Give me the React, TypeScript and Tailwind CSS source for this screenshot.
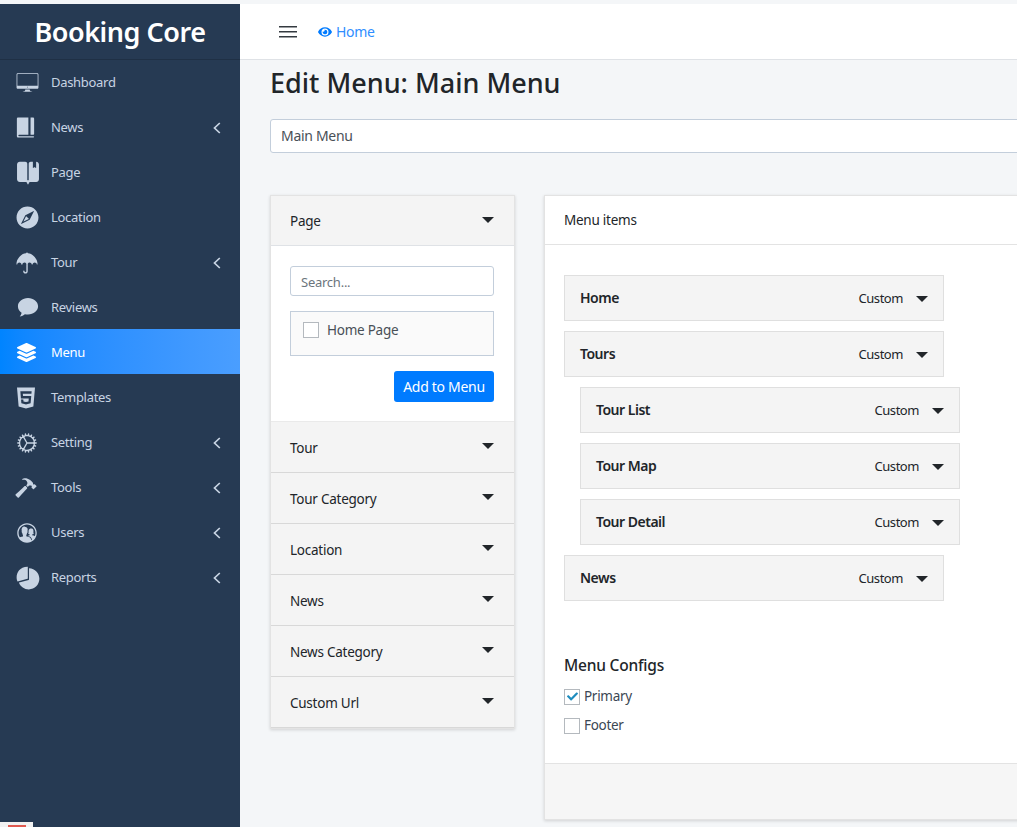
import React from "react";
import { IoIosDesktop, IoIosJournal, IoIosBookmarks, IoIosCompass, IoIosUmbrella, IoIosCog, IoIosHammer, IoIosContacts, IoIosPie, IoLogoHtml5 } from "react-icons/io";
import { FaLayerGroup, FaEye, FaCheck } from "react-icons/fa";

const Bubble = ({ size = 24 }: { size?: number }) => (
  <svg width={size} height={size} viewBox="0 0 24 24" fill="currentColor">
    <path d="M12 1C5.900 1 1 5 1 10c0 3 1.600 5.500 4 7.200-.2 1.600-1 3-2 4 2.200-.2 4.200-1.100 5.600-2.400 1.100.2 2.200.3 3.400.3 6.100 0 11-4 11-9S18.100 1 12 1z" />
  </svg>
);

const Back = () => (
  <svg width="8" height="12" viewBox="0 0 8 12" fill="none" stroke="currentColor" strokeWidth="1.700">
    <polyline points="6.800,1 1.500,6 6.800,11" />
  </svg>
);

const nav = [
  { label: "Dashboard", icon: <IoIosDesktop size={25} className="-ml-[2px]" /> },
  { label: "News", icon: <IoIosJournal size={23} className="-ml-[3px]" />, arrow: true },
  { label: "Page", icon: <IoIosBookmarks size={26} className="-ml-[2px]" /> },
  { label: "Location", icon: <IoIosCompass size={27} className="-ml-[3px]" /> },
  { label: "Tour", icon: <IoIosUmbrella size={26} className="-ml-[3px]" />, arrow: true },
  { label: "Reviews", icon: <Bubble size={22} /> },
  { label: "Menu", icon: <FaLayerGroup size={19} />, active: true },
  { label: "Templates", icon: <IoLogoHtml5 size={24} className="-ml-[3px]" /> },
  { label: "Setting", icon: <IoIosCog size={24} className="-ml-[2px]" />, arrow: true },
  { label: "Tools", icon: <IoIosHammer size={26} className="-ml-[4px]" />, arrow: true },
  { label: "Users", icon: <IoIosContacts size={24} className="-ml-[2px]" />, arrow: true },
  { label: "Reports", icon: <IoIosPie size={26} className="-ml-[2px]" />, arrow: true },
];

const Caret = () => <span className="block h-0 w-0 border-x-[6px] border-t-[6px] border-x-transparent border-t-[#212529]" />;

const SectionHead = ({ label, first }: { label: string; first?: boolean }) => (
  <div className={`flex items-center justify-between bg-[#f4f4f4] pl-[19px] pr-5 ${first ? "h-[50px] border-b border-[#dfe2e6]" : "h-[51px] border-b border-[#d8d8d8]"}`}>
    <span className="pt-[2px] text-[13.500px] tracking-[-0.25px]">{label}</span>
    <span className="mb-[2px]"><Caret /></span>
  </div>
);

const MenuItem = ({ label, child }: { label: string; child?: boolean }) => (
  <div className={`flex h-[46px] w-[380px] items-center justify-between border border-[#dfdfdf] bg-[#f4f4f4] pl-[15px] pr-[15px] ${child ? "ml-4" : ""}`}>
    <span className="mb-[2px] font-semibold tracking-[-0.5px]">{label}</span>
    <span className="mt-[1px] flex items-center gap-[13px] text-[13px] tracking-[-0.45px]">
      Custom
      <Caret />
    </span>
  </div>
);

const Check = ({ label, checked }: { label: string; checked?: boolean }) => (
  <label className="flex h-[29px] items-center gap-1">
    <span className="flex h-4 w-4 items-center justify-center border border-[#b4b9be] bg-white text-[#1e8cbe]">
      {checked && <FaCheck size={11} />}
    </span>
    <span className="text-[13.500px] tracking-[-0.3px] text-[#3b4754]">{label}</span>
  </label>
);

export default function App() {
  return (
    <div className="relative flex h-[827px] w-[1017px] overflow-hidden bg-[#f4f6f8] pt-1 text-[14px] text-[#212529] [font-family:'Noto_Sans',sans-serif]">
      <aside className="flex w-[240px] shrink-0 flex-col bg-[#263a53]">
        <div className="flex h-[55px] items-center justify-center text-[27px] font-semibold leading-none tracking-[-0.45px] text-white shadow-[0_1px_0_#1f3045]">
          Booking Core
        </div>
        {nav.map((n) => (
          <div
            key={n.label}
            className={`flex h-[45px] shrink-0 items-center pl-[17px] pr-[19px] pt-[2px] text-[13px] tracking-[-0.3px] ${n.active ? "bg-gradient-to-r from-[#0084ff] to-[#4a9eff] text-white" : "text-[#c8d4e3]"}`}
          >
            <span className="flex w-[34px] shrink-0 items-center">{n.icon}</span>
            <span className="flex-1">{n.label}</span>
            {n.arrow && <Back />}
          </div>
        ))}
      </aside>

      <main className="min-w-0 flex-1">
        <div className="flex h-[56px] items-center gap-[21px] border-b border-[#dfe2e6] bg-white pl-[39px]">
          <svg width="18" height="12" viewBox="0 0 18 12" className="text-[#343a40]" fill="currentColor">
            <rect y="0" width="18" height="1.500" />
            <rect y="5" width="18" height="1.500" />
            <rect y="10" width="18" height="1.500" />
          </svg>
          <span className="flex items-center gap-1 tracking-[-0.3px] text-[#2f8eff]">
            <FaEye size={14} className="text-[#007bff]" /> Home
          </span>
        </div>

        <div className="w-[900px] pl-[30px]">
          <h1 className="mt-[4px] text-[27px] font-medium leading-[38px]">Edit Menu: Main Menu</h1>
          <div className="mt-[17px] flex h-[34px] w-[860px] items-center rounded-[3px] border border-[#c3cedb] bg-white pb-[2px] pl-[10px] tracking-[-0.3px] text-[#495057]">
            Main Menu
          </div>

          <div className="mt-[42px] flex items-start gap-[29px]">
            <section className="w-[245px] shrink-0 border border-[#e3e3e3] shadow-[0_1px_3px_rgba(0,0,0,0.15)]">
              <SectionHead label="Page" first />
              <div className="flex h-[176px] flex-col border-b border-[#eaeaea] bg-white pl-[19px] pr-5 pt-5">
                <div className="flex h-[30px] items-center rounded-[3px] border border-[#c3cedb] pl-[10px] pt-[3px] text-[13px] tracking-[-0.25px] text-[#6c757d]">
                  Search...
                </div>
                <div className="mt-[15px] flex h-[45px] items-start gap-2 border border-[#c3cedb] bg-[#fafafa] pl-[12px] pt-[9px]">
                  <span className="mt-[1px] h-4 w-4 border border-[#b4b9be] bg-white" />
                  <span className="text-[13.500px] leading-[18px] tracking-[-0.25px] text-[#495057]">Home Page</span>
                </div>
                <div className="mt-[15px] flex justify-end">
                  <button className="h-[31px] w-[100px] rounded-[3px] bg-[#007bff] tracking-[-0.3px] text-white">Add to Menu</button>
                </div>
              </div>
              {["Tour", "Tour Category", "Location", "News", "News Category", "Custom Url"].map((s) => (
                <SectionHead key={s} label={s} />
              ))}
            </section>

            <section className="flex h-[625px] flex-1 flex-col border border-[#e3e3e3] bg-white shadow-[0_1px_3px_rgba(0,0,0,0.15)]">
              <div className="flex h-[49px] shrink-0 items-center border-b border-[#e3e3e3] pl-[19px] text-[13.500px] tracking-[-0.25px]">Menu items</div>
              <div className="flex-1 pl-[19px] pt-[30px]">
                <div className="flex flex-col gap-[10px]">
                  <MenuItem label="Home" />
                  <MenuItem label="Tours" />
                  <MenuItem label="Tour List" child />
                  <MenuItem label="Tour Map" child />
                  <MenuItem label="Tour Detail" child />
                  <MenuItem label="News" />
                </div>
                <div className="mt-[53px] text-[15.500px] font-medium leading-[22px] tracking-[-0.2px]">Menu Configs</div>
                <div className="mt-[6px]">
                  <Check label="Primary" checked />
                  <Check label="Footer" />
                </div>
              </div>
              <div className="h-[56px] shrink-0 border-t border-[#e3e3e3] bg-[#f6f6f6]" />
            </section>
          </div>
        </div>
      </main>

      <div className="absolute bottom-0 left-0 flex h-[5px] w-[33px] items-end justify-center bg-[#f2f2f2]">
        <span className="h-[2px] w-[18px] bg-[#e05a50]" />
      </div>
    </div>
  );
}
